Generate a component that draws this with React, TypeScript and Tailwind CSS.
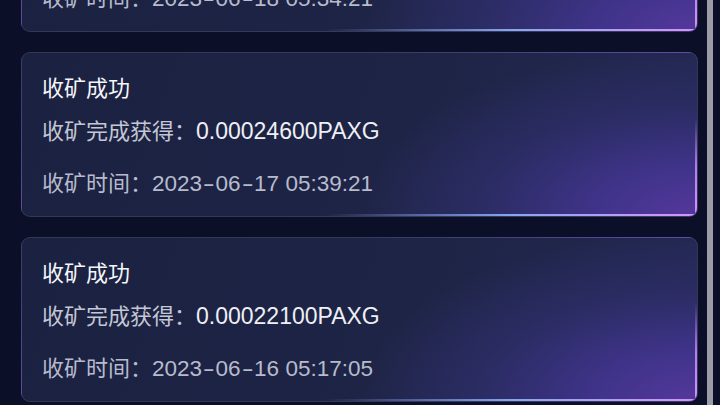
import React from "react";

type Rec = { amount: string; date: string; time: string };

const records: Rec[] = [
  { amount: "0.00025100PAXG", date: "2023-06-18", time: "05:34:21" },
  { amount: "0.00024600PAXG", date: "2023-06-17", time: "05:39:21" },
  { amount: "0.00022100PAXG", date: "2023-06-16", time: "05:17:05" },
];

function DateText({ date, time }: { date: string; time: string }) {
  const parts = date.split("-");
  return (
    <span className="text-[22.5px]">
      {parts.map((p, i) => (
        <React.Fragment key={i}>
          {i > 0 && <span className="inline-block mx-[3px] scale-x-[1.6]">-</span>}
          {p}
        </React.Fragment>
      ))}{" "}
      {time}
    </span>
  );
}

function Card({ r }: { r: Rec }) {
  return (
    <div className="relative h-[165px] shrink-0 overflow-hidden rounded-[9px] border border-white/10 bg-[image:radial-gradient(340px_170px_at_100%_100%,#54389c_0%,#3f3389_30%,#2a2c62_65%,transparent_100%),linear-gradient(110deg,#1b2141_0%,#1e2445_55%,#232853_100%)] pl-[20px] pt-[21px]">
      <div className="text-[22px] leading-[30px] font-normal text-[#f5f6fa]">收矿成功</div>
      <div className="mt-[12px] text-[22px] leading-[30px] text-[#c4c7d5]">
        收矿完成获得：<span className="text-[23px] text-[#eef0f5]">{r.amount}</span>
      </div>
      <div className="mt-[22px] text-[22px] leading-[30px] text-[#b7bbcd]">
        收矿时间：<DateText date={r.date} time={r.time} />
      </div>
      <div className="absolute right-0 top-[40%] bottom-0 w-[2px] bg-gradient-to-b from-transparent via-[#b57cf0] to-[#d592ff]" />
      <div className="absolute bottom-0 right-0 left-[45%] h-[2px] bg-gradient-to-r from-transparent via-[#88a6f0] to-[#d592ff]" />
    </div>
  );
}

export default function App() {
  return (
    <div
      className="flex h-[405px] w-[720px] overflow-hidden bg-[#0b1028]"
      style={{ fontFamily: '"Liberation Sans", "Noto Sans CJK SC", sans-serif' }}
    >
      <div className="-mt-[133px] flex w-[707px] shrink-0 flex-col gap-[20px] pl-[21px] pr-[9px]">
        {records.map((r, i) => (
          <Card key={i} r={r} />
        ))}
      </div>
      <div className="h-full w-[6px] shrink-0 bg-[#9a9ca7]" />
      <div className="flex-1" />
    </div>
  );
}
